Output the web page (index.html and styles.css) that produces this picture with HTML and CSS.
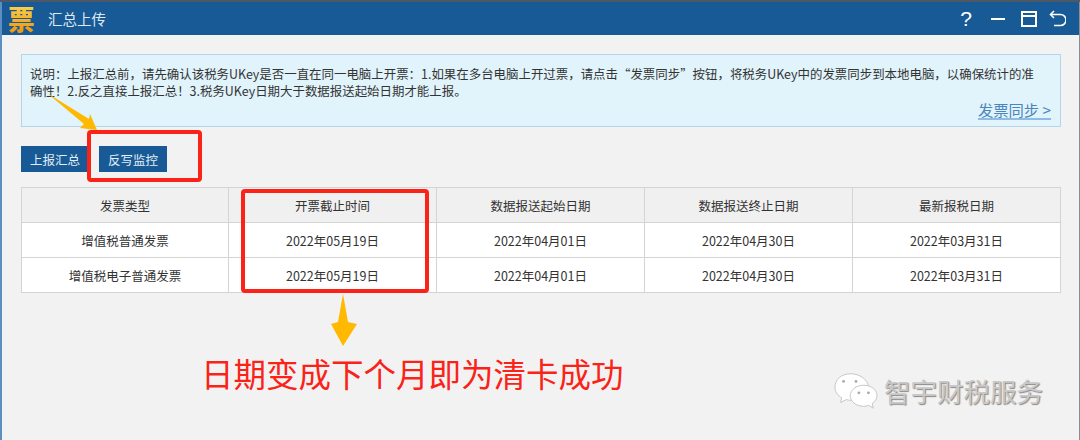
FILE: index.html
```html
<!DOCTYPE html>
<html lang="zh-CN">
<head>
  <meta charset="UTF-8" />
  <title>汇总上传</title>
  <link rel="stylesheet" href="styles.css">
</head>
<body>
  <div class="window">
    <div class="titlebar">
      <div class="logo">票</div>
      <div class="title">汇总上传</div>
      <div class="controls">
        <span class="help">?</span>
        <svg width="14" height="4" viewBox="0 0 14 4"><path d="M0 2h14" stroke="#fff" stroke-width="2"/></svg>
        <svg width="16" height="16" viewBox="0 0 16 16" fill="none" stroke="#fff" stroke-width="2"><rect x="1" y="1" width="14" height="14"/><path d="M1 5h14"/></svg>
        <svg class="back" width="17" height="17" viewBox="0 0 17 17" fill="none" stroke="#fff" stroke-width="1.6"><path d="M5 1 1.5 4.5 5 8"/><path d="M2 4.5h9.500a4.500 4.500 0 0 1 0 11H5"/></svg>
      </div>
    </div>

    <div class="content">
      <div class="notice">
        <p>说明：上报汇总前，请先确认该税务UKey是否一直在同一电脑上开票：1.如果在多台电脑上开过票，请点击“发票同步”按钮，将税务UKey中的发票同步到本地电脑，以确保统计的准确性！2.反之直接上报汇总！3.税务UKey日期大于数据报送起始日期才能上报。</p>
        <div class="sync-row"><a class="sync">发票同步 &gt;</a></div>
      </div>

      <div class="actions">
        <button>上报汇总</button>
        <button>反写监控</button>
      </div>

      <table class="report">
        <tr>
          <th class="type-col">发票类型</th>
          <th>开票截止时间</th>
          <th>数据报送起始日期</th>
          <th>数据报送终止日期</th>
          <th>最新报税日期</th>
        </tr>
        <tr>
          <td>增值税普通发票</td>
          <td>2022年05月19日</td>
          <td>2022年04月01日</td>
          <td>2022年04月30日</td>
          <td>2022年03月31日</td>
        </tr>
        <tr>
          <td>增值税电子普通发票</td>
          <td>2022年05月19日</td>
          <td>2022年04月01日</td>
          <td>2022年04月30日</td>
          <td>2022年03月31日</td>
        </tr>
      </table>
    </div>

    <!-- annotations drawn over the screenshot -->
    <div class="mark mark-btn"></div>
    <div class="mark mark-col"></div>
    <svg class="arrow arrow-diag" width="52" height="40" viewBox="0 0 52 40"><path d="M0 0 42 26 43 21 50 37 33 35 37 31Z" fill="#ffb900"/></svg>
    <svg class="arrow arrow-down" width="30" height="54" viewBox="0 0 30 54"><path d="M15 2 20 30 29 32 15 54 3 32 10 30Z" fill="#ffb900"/></svg>
    <div class="caption">日期变成下个月即为清卡成功</div>

    <div class="watermark">
      <svg width="44" height="40" viewBox="0 0 46 40">
        <path d="M17 3C8 3 1 9 1 17c0 5 3 9 7 11l-1 5 6-3c3 1 6 1 8 0-2-8 5-15 15-14C35 9 27 3 17 3Z" fill="#fff" stroke="#c4c4c4"/>
        <path d="M31 15c-8 0-14 5-14 11s6 11 14 11c2 0 3 0 5-1l5 3-1-5c3-2 5-5 5-8 0-6-6-11-14-11Z" fill="#fff" stroke="#c4c4c4"/>
        <circle cx="10" cy="11" r="1.500" fill="#aaa"/><circle cx="23" cy="11" r="1.500" fill="#aaa"/>
        <circle cx="26" cy="23" r="1.500" fill="#aaa"/><circle cx="36" cy="23" r="1.500" fill="#aaa"/>
      </svg>
      <span>智宇财税服务</span>
    </div>
  </div>
</body>
</html>
```

FILE: styles.css
```css
* {
  box-sizing: border-box;
}

body {
  margin: 0;
  width: 1080px;
  height: 440px;
  overflow: hidden;
  background: #4d5a66;
  font-family: "Noto Sans CJK SC", "Liberation Sans", sans-serif;
}

.window {
  position: relative;
  height: 440px;
  margin-top: 2px;
  background: #f2f2f2;
  border-left: 2px solid #5b8fc0;
  border-right: 1px solid #8a8f94;
}

.titlebar {
  display: flex;
  align-items: center;
  height: 33px;
  background: #175a96;
  color: #fff;
}

.logo {
  width: 38px;
  height: 30px;
  margin-left: 6px;
  font-size: 27px;
  font-weight: 900;
  line-height: 30px;
  background: linear-gradient(#fbd24e, #ee930e);
  -webkit-background-clip: text;
  background-clip: text;
  color: transparent;
}

.title {
  margin-left: 2px;
  font-size: 14.500px;
  color: #dfe9f2;
}

.controls {
  display: flex;
  align-items: center;
  gap: 16px;
  margin-left: auto;
  padding-right: 13px;
}

.controls .back {
  margin-left: -4px;
}

.help {
  font-family: "Liberation Sans", sans-serif;
  font-size: 21px;
  line-height: 20px;
  margin-right: 3px;
}

.content {
  padding: 19px 18px 0 19px;
}

.notice {
  height: 73px;
  padding: 11px 20px 0 8px;
  background: #e1f3fb;
  border: 1px solid #b5d5ea;
  color: #333;
  font-size: 12.450px;
  line-height: 17px;
}

.notice p {
  margin: 0;
}

.sync-row {
  display: flex;
  justify-content: flex-end;
  margin: 1px -11px 0 0;
}

.sync {
  padding-bottom: 1px;
  font-size: 15.300px;
  line-height: 16px;
  color: #4a86bb;
  border-bottom: 2px solid #8dbbe3;
}

.actions {
  display: flex;
  gap: 10px;
  margin-top: 19px;
}

.actions button {
  width: 68px;
  height: 26px;
  border: none;
  padding: 0;
  background: #175a96;
  color: #e4edf5;
  font-family: inherit;
  font-size: 12.500px;
}

.report {
  width: 1040px;
  margin-top: 15px;
  border-collapse: collapse;
  table-layout: fixed;
  font-size: 12.500px;
  color: #333;
}

.report th,
.report td {
  height: 35px;
  padding: 0;
  border: 1px solid #d4d4d4;
  text-align: center;
  font-weight: normal;
}

.report .type-col {
  width: 207px;
}

.report th {
  background: #f0f0f0;
}

.report td {
  background: #fff;
}

.mark {
  position: absolute;
  border: 4px solid #fb2218;
  border-radius: 4px;
}

.mark-btn {
  left: 85px;
  top: 128px;
  width: 115px;
  height: 52px;
}

.mark-col {
  left: 239px;
  top: 187px;
  width: 188px;
  height: 104px;
}

.arrow {
  position: absolute;
}

.arrow-diag {
  left: 45px;
  top: 91px;
}

.arrow-down {
  left: 326px;
  top: 290px;
}

.caption {
  position: absolute;
  left: 199px;
  top: 349px;
  font-size: 32.500px;
  line-height: 44px;
  color: #fb2218;
}

.watermark {
  position: absolute;
  left: 832px;
  top: 368px;
  display: flex;
  align-items: center;
  gap: 6px;
  color: #c8c8c8;
  font-size: 26.500px;
  text-shadow: 1px 1px 1px #888;
}
```
